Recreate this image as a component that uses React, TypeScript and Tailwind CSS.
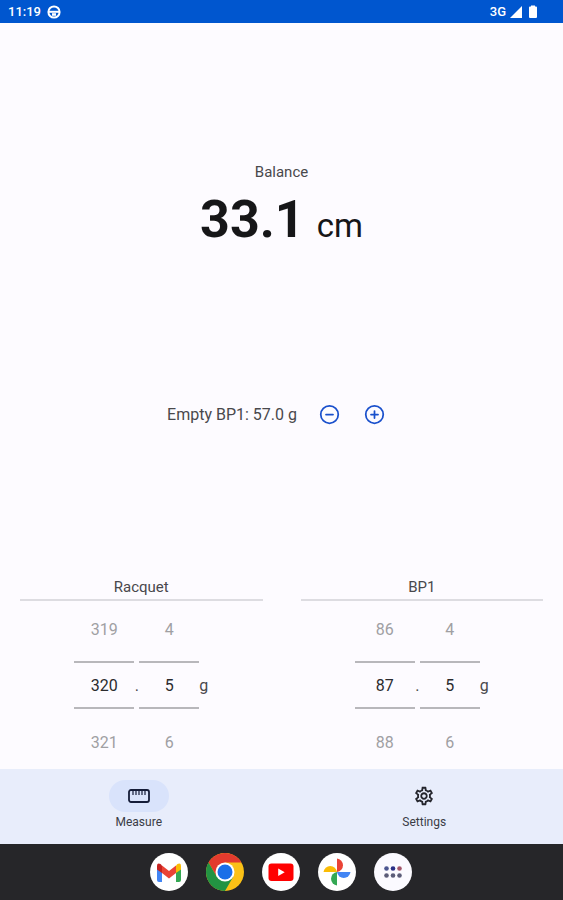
import React, { useState } from 'react';
import { CircleMinus, CirclePlus } from 'lucide-react';
import { MdOutlineSettings } from 'react-icons/md';

const RulerIcon = () => (
  <svg width="22" height="14" viewBox="0 0 22 14" fill="none" stroke="currentColor">
    <rect x="1" y="1" width="20" height="12" rx="2" strokeWidth="1.800" />
    <path d="M5 2v4M8 2v4M11 2v4M14 2v4M17 2v4" strokeWidth="1.2" />
  </svg>
);

const WheelIcon = () => (
  <svg width="14" height="14" viewBox="0 0 14 14" fill="none" stroke="currentColor">
    <circle cx="7" cy="7" r="5.6" strokeWidth="2" />
    <path d="M1.5 6.8h11" strokeWidth="2" />
    <path d="M5 8.2h4v2.6H5z" fill="currentColor" stroke="none" />
  </svg>
);

const StatusBar = () => (
  <header className="flex h-[23px] items-center justify-between bg-[#0056cf] pl-2 pr-6 text-white">
    <div className="flex items-center gap-1.5">
      <span className="text-[13px] font-medium">11:19</span>
      <WheelIcon />
    </div>
    <div className="flex items-center gap-1">
      <span className="text-[13px] font-medium">3G</span>
      <svg width="12" height="12" viewBox="0 0 12 12" fill="currentColor">
        <path d="M12 0v12H0z" />
      </svg>
      <svg width="13" height="13" viewBox="0 0 13 13" fill="currentColor">
        <path d="M5 1.5V.5h4v1h1a1 1 0 0 1 1 1V12a1 1 0 0 1-1 1H4a1 1 0 0 1-1-1V2.5a1 1 0 0 1 1-1z" />
      </svg>
    </div>
  </header>
);

interface WheelProps {
  label: string;
  value: number;
  onChange: (value: number) => void;
}

const Wheel = ({ label, value, onChange }: WheelProps) => (
  <div className="flex w-[60px] flex-col text-base">
    <button
      type="button"
      aria-label={`${label} down`}
      className="h-15 pb-0.5 text-[#a09fa3]"
      onClick={() => onChange(value - 1)}
    >
      {value - 1}
    </button>
    <input
      type="text"
      inputMode="numeric"
      aria-label={label}
      className="h-12 w-full border-y-2 border-[#b8b7bb] bg-transparent text-center text-[#2b2b2e] outline-none"
      value={value}
      onChange={e => onChange(Number(e.target.value) || 0)}
    />
    <button
      type="button"
      aria-label={`${label} up`}
      className="h-15 pt-2 text-[#a09fa3]"
      onClick={() => onChange(value + 1)}
    >
      {value + 1}
    </button>
  </div>
);

interface WeightPickerProps {
  title: string;
  whole: number;
  tenth: number;
}

const WeightPicker = ({ title, whole, tenth }: WeightPickerProps) => {
  const [grams, setGrams] = useState(whole);
  const [tenths, setTenths] = useState(tenth);

  return (
    <section>
      <h2 className="border-b-2 border-[#dddce1] pb-0.5 text-center text-[15px] leading-5 text-[#49484c]">
        {title}
      </h2>
      <div className="flex items-center justify-center">
        <Wheel label={`${title} grams`} value={grams} onChange={setGrams} />
        <span className="w-[5px] pt-0.5 text-center text-base text-[#49484c]">.</span>
        <Wheel label={`${title} tenths`} value={tenths} onChange={setTenths} />
        <span className="pt-0.5 text-base text-[#49484c]">g</span>
      </div>
    </section>
  );
};

const NavBar = () => (
  <nav className="grid grid-cols-2 gap-2 bg-[#e8edfb] pb-[14px] pt-[11px] text-xs text-[#3a3c45]">
    <a href="#measure" aria-current="page" className="flex flex-col items-center gap-0.5">
      <span className="flex h-8 w-[60px] items-center justify-center rounded-full bg-[#d9e3fb] text-[#141c38]">
        <RulerIcon />
      </span>
      Measure
    </a>
    <a href="#settings" className="flex flex-col items-center gap-0.5">
      <span className="flex h-8 w-[60px] items-center justify-center text-[#25262d]">
        <MdOutlineSettings size={22} />
      </span>
      Settings
    </a>
  </nav>
);

const GmailLogo = () => (
  <svg width="38" height="38" viewBox="0 0 38 38">
    <circle cx="19" cy="19" r="19" fill="#fff" />
    <path d="M7 13v14q0 2 2 2h3V16z" fill="#4285f4" />
    <path d="M31 13v14q0 2-2 2h-3V16z" fill="#34a853" />
    <path d="M26 12.5l1.5-1.5q3.5-1.5 3.5 2v3.5l-5 3.5z" fill="#fbbc04" />
    <path d="M7 16.5V13q0-3.5 3.5-2l1.5 1.5V20z" fill="#c5221f" />
    <path d="M12 12.5l7 5.5 7-5.5V20l-7 5.5-7-5.5z" fill="#ea4335" />
  </svg>
);

const ChromeLogo = () => (
  <svg width="38" height="38" viewBox="0 0 38 38">
    <circle cx="19" cy="19" r="19" fill="#fbc116" />
    <path d="M2.55 9.5A19 19 0 0 1 35.45 9.5H19L10.77 23.75z" fill="#e33b2e" />
    <path d="M2.55 9.5A19 19 0 0 0 19 38L27.23 23.75H10.77z" fill="#229342" />
    <circle cx="19" cy="19" r="9.5" fill="#fff" />
    <circle cx="19" cy="19" r="7.5" fill="#1a6fe8" />
  </svg>
);

const YoutubeLogo = () => (
  <svg width="38" height="38" viewBox="0 0 38 38">
    <circle cx="19" cy="19" r="19" fill="#fff" />
    <rect x="6.5" y="10.5" width="25" height="17.5" rx="3" fill="#f00" />
    <path d="M16.2 15.5V23l6.5-3.75z" fill="#fff" />
  </svg>
);

const PhotosLogo = () => (
  <svg width="38" height="38" viewBox="0 0 38 38">
    <circle cx="19" cy="19" r="19" fill="#fff" />
    <path d="M19 5.5a6.8 6.8 0 0 1 0 13.5z" fill="#ea4335" />
    <path d="M32.5 19a6.8 6.8 0 0 1-13.5 0z" fill="#4285f4" />
    <path d="M19 32.5a6.8 6.8 0 0 1 0-13.5z" fill="#34a853" />
    <path d="M5.5 19a6.8 6.8 0 0 1 13.5 0z" fill="#fbbc04" />
  </svg>
);

const AllAppsLogo = () => (
  <svg width="38" height="38" viewBox="0 0 38 38">
    <circle cx="19" cy="19" r="19" fill="#fbfaff" />
    <circle cx="12.5" cy="15.5" r="2.3" fill="#4c5690" />
    <circle cx="19" cy="15.5" r="2.3" fill="#2a2f86" />
    <circle cx="25.5" cy="15.5" r="2.3" fill="#a3566a" />
    <circle cx="12.5" cy="22.5" r="2.3" fill="#5b5c78" />
    <circle cx="19" cy="22.5" r="2.3" fill="#5b5c78" />
    <circle cx="25.5" cy="22.5" r="2.3" fill="#5b5c78" />
  </svg>
);

const Taskbar = () => (
  <footer className="flex h-14 items-center justify-center gap-[18px] bg-[#262629] pr-px">
    <button type="button" aria-label="Gmail"><GmailLogo /></button>
    <button type="button" aria-label="Chrome"><ChromeLogo /></button>
    <button type="button" aria-label="YouTube"><YoutubeLogo /></button>
    <button type="button" aria-label="Photos"><PhotosLogo /></button>
    <button type="button" aria-label="All apps"><AllAppsLogo /></button>
  </footer>
);

const App: React.FC = () => {
  const [emptyWeight, setEmptyWeight] = useState(57);

  return (
    <div className="flex min-h-screen flex-col bg-[#fdfbff] font-['Roboto',sans-serif]">
      <StatusBar />

      <main className="flex flex-grow flex-col">
        <section className="flex flex-grow flex-col items-center justify-center pt-3">
          <h1 className="text-[15px] leading-6 text-[#49484c]">Balance</h1>
          <p className="flex items-baseline gap-3 leading-[72px] text-[#161618]">
            <span className="text-[52px] font-bold">33.1</span>
            <span className="text-[33px]">cm</span>
          </p>
        </section>

        <div className="flex h-14 items-center justify-center gap-[22px] pr-[11px]">
          <span className="pt-0.5 text-base text-[#49484c]">Empty BP1: {emptyWeight.toFixed(1)} g</span>
          <div className="flex gap-6 text-[#1a50cc]">
            <button type="button" aria-label="Decrease" onClick={() => setEmptyWeight(w => w - 0.1)}>
              <CircleMinus size={21} />
            </button>
            <button type="button" aria-label="Increase" onClick={() => setEmptyWeight(w => w + 0.1)}>
              <CirclePlus size={21} />
            </button>
          </div>
        </div>

        <div className="grid grid-cols-2 gap-[38px] px-5 pt-[135px]">
          <WeightPicker title="Racquet" whole={320} tenth={5} />
          <WeightPicker title="BP1" whole={87} tenth={5} />
        </div>
      </main>

      <NavBar />
      <Taskbar />
    </div>
  );
};

export default App;
